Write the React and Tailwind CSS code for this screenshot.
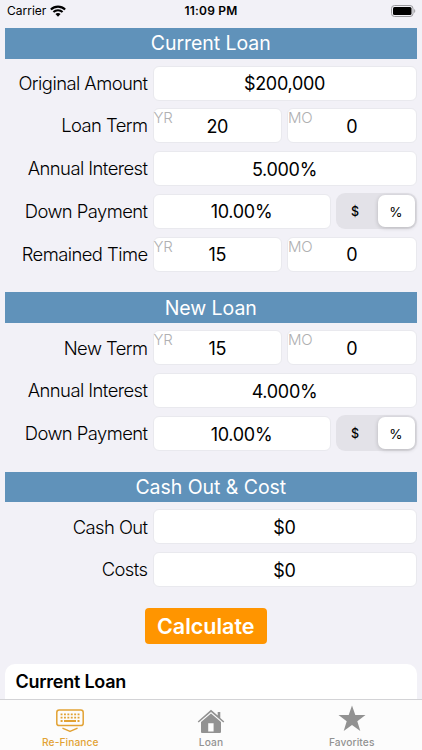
import React from 'react';

const Header = ({ children }) => (
    <div className="h-[30.5px] pt-px bg-[#6092ba] text-white text-[19.5px] tracking-[-0.05px] flex items-center justify-center">
        {children}
    </div>
);

const Field = ({ value, hint, className = 'flex-1' }) => (
    <div className={`relative h-[35px] rounded-[6px] border border-[#e9e9ee] bg-white flex items-center justify-center pt-px text-[18px] tracking-[-0.3px] text-black ${className}`}>
        {hint && (
            <span className="absolute left-0 top-0 text-[15px] leading-[18px] font-light text-[#b0b0b2]">{hint}</span>
        )}
        {value}
    </div>
);

const Row = ({ label, children }) => (
    <div className="flex items-center h-[35px]">
        <div className="w-[142px] mr-[5px] pt-px shrink-0 text-right text-[18.4px] tracking-[-0.55px] font-light whitespace-nowrap text-black">
            {label}
        </div>
        <div className="flex flex-1 gap-[5px]">{children}</div>
    </div>
);

const TermRow = ({ label, years, months }) => (
    <Row label={label}>
        <Field hint="YR" value={years} />
        <Field hint="MO" value={months} />
    </Row>
);

const DownPaymentRow = ({ value }) => (
    <Row label="Down Payment">
        <Field value={value} />
        <div className="w-[81px] h-[36px] -my-px rounded-[9px] bg-[#e3e2e8] p-[2px] flex text-[12.5px] text-black">
            <div className="flex-1 flex items-center justify-center pt-[3px] pr-[5px] font-medium">$</div>
            <div className="w-[37px] rounded-[7px] bg-white shadow-[0_1px_4px_rgba(0,0,0,0.2)] flex items-center justify-center pt-[3px] text-[13.5px]">%</div>
        </div>
    </Row>
);

const WifiIcon = () => (
    <svg width="16" height="12" viewBox="0 0 15 11" fill="none" stroke="#000" strokeWidth="2">
        <path d="M.8 4.1C4.6.5 10.4.5 14.2 4.1" />
        <path d="M3.2 6.5C5.6 4.2 9.4 4.2 11.8 6.5" />
        <path d="M7.5 10.8 5.1 8.4C6.4 7.1 8.6 7.1 9.9 8.4Z" fill="#000" stroke="none" />
    </svg>
);

const BatteryIcon = () => (
    <svg width="25" height="12" viewBox="0 0 25 12">
        <rect x=".5" y=".5" width="21.5" height="11" rx="3" fill="none" stroke="#9a9a9e" />
        <rect x="2" y="2" width="18.5" height="8" rx="1.5" fill="#000" />
        <path d="M23.2 4v4c1.4-.6 1.4-3.4 0-4Z" fill="#9a9a9e" />
    </svg>
);

const KeyboardIcon = () => (
    <svg width="28" height="24" viewBox="0 0 28 24" fill="none" stroke="currentColor">
        <rect x=".8" y="1" width="26.4" height="15.6" rx="2.4" strokeWidth="1.5" />
        <path d="M4.6 5.3h19M4.6 8.6h19" strokeWidth="1.8" strokeDasharray="1.9 1.5" />
        <path d="M4.6 12h2M8 12h12M21.5 12h2" strokeWidth="1.8" />
        <path d="M7 19.4 14 22.4 21 19.4" strokeWidth="1.5" strokeLinecap="round" strokeLinejoin="round" />
    </svg>
);

// roof line with chimney on the right, walls with an open doorway
const HouseIcon = () => (
    <svg width="28" height="25" viewBox="0 0 28 25" fill="currentColor">
        <path d="M14 .8.7 12.4l1 1.1L14 2.9l12.3 10.6 1-1.1-4-3.5V3h-2.6v3.6Z" />
        <path fillRule="evenodd" d="M14 4.5 4 13.1v9.6c0 .8.5 1.3 1.3 1.3h17.4c.8 0 1.3-.5 1.3-1.3v-9.6ZM11.2 14.2h5.4v8.4h-5.4Z" />
    </svg>
);

const StarIcon = () => (
    <svg width="28" height="27" viewBox="0 0 28 27" fill="currentColor">
        <path d="M14 .5 17.3 10H27.5L19.3 16.2 22.3 26 14 20.1 5.7 26 8.7 16.2.5 10H10.7Z" />
    </svg>
);

const Tab = ({ icon, label, active, iconClass = 'pt-[6px]' }) => (
    <div className={`flex-1 flex flex-col items-center ${active ? 'text-[#e2a234]' : 'text-[#929292]'}`}>
        <div className={`h-[36px] flex items-center ${iconClass}`}>{icon}</div>
        <span className="text-[10.2px] leading-[13px] font-medium tracking-[0.1px]">{label}</span>
    </div>
);

const App = () => (
    <div className="w-[422px] h-[750px] overflow-hidden bg-[#f2f1f7] flex flex-col font-['Inter',sans-serif]">
        <div className="h-[28px] shrink-0 grid grid-cols-3 items-center px-[7px] pb-[6px] text-[12px] text-black">
            <div className="flex items-center gap-[4px]">
                Carrier <WifiIcon />
            </div>
            <div className="text-center font-semibold tracking-[0.2px]">11:09 PM</div>
            <div className="flex justify-end -mr-[1px]">
                <BatteryIcon />
            </div>
        </div>

        <div className="flex-1 overflow-hidden pl-[5px] pr-[5.5px]">
            <Header>Current Loan</Header>
            <div className="flex flex-col gap-[7.8px] pt-[7px] pb-[20.8px] pl-[0.5px]">
                <Row label="Original Amount">
                    <Field value="$200,000" />
                </Row>
                <TermRow label="Loan Term" years="20" months="0" />
                <Row label="Annual Interest">
                    <Field value="5.000%" />
                </Row>
                <DownPaymentRow value="10.00%" />
                <TermRow label="Remained Time" years="15" months="0" />
            </div>

            <Header>New Loan</Header>
            <div className="flex flex-col gap-[7.8px] pt-[7.5px] pb-[20.5px] pl-[0.5px]">
                <TermRow label="New Term" years="15" months="0" />
                <Row label="Annual Interest">
                    <Field value="4.000%" />
                </Row>
                <DownPaymentRow value="10.00%" />
            </div>

            <Header>Cash Out &amp; Cost</Header>
            <div className="flex flex-col gap-[7.8px] pt-[7.4px] pl-[0.5px]">
                <Row label="Cash Out">
                    <Field value="$0" />
                </Row>
                <Row label="Costs">
                    <Field value="$0" />
                </Row>
            </div>

            <button className="block ml-[139.5px] mt-[20.3px] w-[122.5px] h-[36px] pt-px rounded-[4px] bg-[#ff9500] text-white text-[21.5px] font-semibold">
                Calculate
            </button>

            <div className="mt-[20px] h-[60px] rounded-t-[10px] bg-white px-[10.5px] pt-[4.5px] text-[18px] leading-[28px] tracking-[-0.25px] font-semibold text-black">
                Current Loan
            </div>
        </div>

        <div className="h-[51px] shrink-0 border-t border-[#d3d3d6] bg-[#fcfcfc] flex">
            <Tab icon={<KeyboardIcon />} label="Re-Finance" active />
            <Tab icon={<HouseIcon />} label="Loan" />
            <Tab icon={<StarIcon />} label="Favorites" iconClass="" />
        </div>
    </div>
);

export default App;
